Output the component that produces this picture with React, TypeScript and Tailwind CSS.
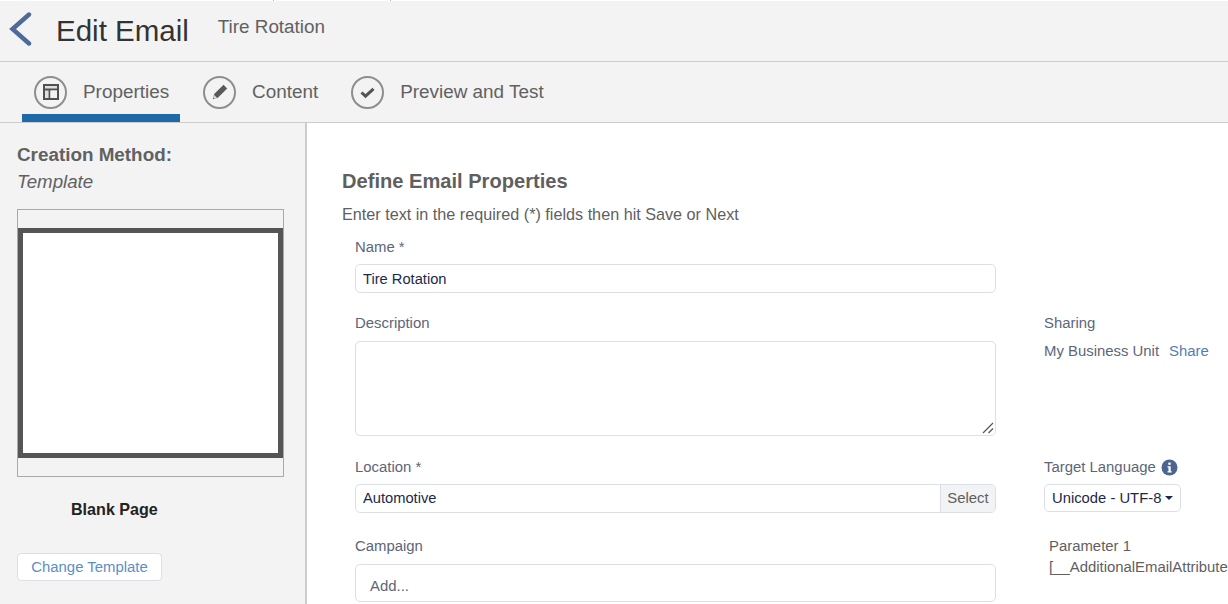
import React from "react";

const font = { fontFamily: '"Liberation Sans", Arial, sans-serif' };

function Circle({ children }: { children: React.ReactNode }) {
  return (
    <span className="flex h-[33px] w-[33px] shrink-0 items-center justify-center rounded-full border-2 border-[#8e8e8e] bg-[#f3f3f3]">
      {children}
    </span>
  );
}

function Tab({ icon, label, className }: { icon: React.ReactNode; label: string; className: string }) {
  return (
    <div className={`flex h-full items-center ${className}`}>
      <Circle>{icon}</Circle>
      <span className="ml-[16px] text-[18.9px] leading-none text-[#616161]">{label}</span>
    </div>
  );
}

const labelCls = "text-[14.9px] leading-[18px] text-[#5d6679]";
const boxCls = "rounded-[5px] border border-[#dcdfe8] bg-white";

export default function App() {
  return (
    <div style={font} className="flex h-[604px] w-[1228px] flex-col overflow-hidden bg-white">
      <header className="relative flex h-[62px] shrink-0 items-center border-t border-b border-t-white border-b-[#cccccc] bg-[#f3f3f3]">
        <span className="absolute top-[-1px] left-[273px] h-px w-px bg-[#bbbbbb]" />
        <span className="absolute top-[-1px] left-[390px] h-px w-px bg-[#bbbbbb]" />
        <svg width="24" height="34" viewBox="0 0 24 34" className="mb-[5px] ml-[9px]" fill="none">
          <path d="M20 2.500 L3.500 17 L20 31.500" stroke="#4d6a99" strokeWidth="4.4" strokeLinecap="round" strokeLinejoin="miter" />
        </svg>
        <h1 className="ml-[23px] text-[29.5px] leading-none font-normal text-[#333333]">Edit Email</h1>
        <span className="ml-[29px] -translate-y-[4px] text-[18.85px] leading-none text-[#616161]">Tire Rotation</span>
      </header>

      <nav className="flex h-[61px] shrink-0 border-b border-[#cccccc] bg-[#f3f3f3] pl-[22px]">
        <div className="flex h-full w-[158px] items-center border-b-[8px] border-[#1f69a8] pl-[12px] pt-[8px]">
          <Circle>
            <svg width="18" height="18" viewBox="0 0 18 18" fill="none">
              <rect x="2" y="2" width="14" height="14" fill="#dedede" stroke="#505050" strokeWidth="2" />
              <path d="M2 6.500H16M7.500 6.500V16" stroke="#505050" strokeWidth="1.800" />
              <rect x="8.500" y="7.500" width="6.500" height="7.500" fill="#f3f3f3" />
            </svg>
          </Circle>
          <span className="ml-[16px] text-[18.9px] leading-none text-[#616161]">Properties</span>
        </div>
        <Tab
          className="ml-[23px]"
          label="Content"
          icon={
            <svg width="18" height="18" viewBox="0 0 18 18">
              <path fill="#5a5a5a" d="M12.500 1.800l3.700 3.700-9.300 9.300-5.100 1.400 1.400-5.100z" />
              <path fill="#dddddd" d="M3.100 11.900l3 3-2.600 .8-1.200-1.200z" />
            </svg>
          }
        />
        <Tab
          className="ml-[33px]"
          label="Preview and Test"
          icon={
            <svg width="17" height="17" viewBox="0 0 17 17" fill="none">
              <path d="M2.500 8.500l4 3.700 8-7.400" stroke="#555" strokeWidth="3" />
            </svg>
          }
        />
      </nav>

      <div className="flex min-h-0 flex-1">
        <aside className="w-[307px] shrink-0 border-r-2 border-[#cccccc] bg-[#f3f3f3] pl-[17px] pt-[21px]">
          <h2 className="text-[18.850px] leading-[22px] font-bold text-[#616161]">Creation Method:</h2>
          <p className="mt-[5px] text-[18.700px] leading-[22px] text-[#616161] italic">Template</p>
          <div className="mt-[16px] flex h-[268px] w-[267px] flex-col justify-center border border-[#a9a9a9]">
            <div className="h-[230px] border-[5px] border-[#555555] bg-white" />
          </div>
          <p className="mt-[22px] ml-[54px] text-[16.100px] leading-[20px] font-bold text-[#222222]">Blank Page</p>
          <button className="mt-[34px] block h-[28px] w-[145px] rounded-[4px] border border-[#dcdfe8] bg-white text-center text-[14.900px] leading-none text-[#5b8fc9]">
            Change Template
          </button>
        </aside>

        <main className="min-w-0 flex-1 pl-[35px] pt-[46px]">
          <h2 className="text-[20.100px] leading-[24px] font-bold text-[#5f5f5f]">Define Email Properties</h2>
          <p className="mt-[12px] text-[16.200px] leading-[18px] text-[#5f5f5f]">Enter text in the required (*) fields then hit Save or Next</p>

          <div className="mt-[15px] ml-[13px] flex gap-[48px]">
            <div className="w-[641px] shrink-0">
              <label className={`block ${labelCls}`}>Name *</label>
              <div className={`mt-[8px] flex h-[29px] items-center px-[7px] pt-[1px] text-[14.7px] text-[#1b2a4a] ${boxCls}`}>Tire Rotation</div>

              <label className={`mt-[21px] block ${labelCls}`}>Description</label>
              <div className={`relative mt-[9px] h-[95px] ${boxCls}`}>
                <svg width="12" height="12" viewBox="0 0 12 12" className="absolute right-[1px] bottom-[1px]" stroke="#555" strokeWidth="1.200">
                  <path d="M1 11L11 1M6.500 11L11 6.500" />
                </svg>
              </div>

              <label className={`mt-[22px] block ${labelCls}`}>Location *</label>
              <div className={`mt-[8px] flex h-[29px] items-center overflow-hidden ${boxCls}`}>
                <span className="flex-1 px-[7px] text-[14.7px] text-[#1b2a4a]">Automotive</span>
                <span className="flex h-full w-[55px] items-center justify-center border-l border-[#dcdfe8] bg-[#f2f3f5] text-[14.9px] text-[#5f5f5f]">Select</span>
              </div>

              <label className={`mt-[24px] block ${labelCls}`}>Campaign</label>
              <div className={`mt-[9px] flex h-[38px] items-center pl-[14px] pt-[7px] text-[14.9px] text-[#5d6679] ${boxCls}`}>Add...</div>
            </div>

            <div className="min-w-0 flex-1 whitespace-nowrap">
              <div className="h-[76px]" />
              <p className={labelCls}>Sharing</p>
              <p className={`mt-[10px] ${labelCls}`}>
                My Business Unit<span className="ml-[10px] text-[#4f7fb8]">Share</span>
              </p>
              <p className={`mt-[98px] flex items-center gap-[5px] ${labelCls}`}>
                Target Language
                <svg width="17" height="17" viewBox="0 0 17 17">
                  <circle cx="8.500" cy="8.500" r="8" fill="#4d6490" />
                  <rect x="7.300" y="3.600" width="2.400" height="2.200" fill="#fff" />
                  <path d="M6.500 7.200h3.200v5h1v1.200H6.500v-1.200h1v-3.800h-1z" fill="#fff" />
                </svg>
              </p>
              <div className={`mt-[8px] flex h-[28px] w-[137px] items-center pl-[7px] text-[14.8px] text-[#1b2a4a] ${boxCls}`}>
                Unicode - UTF-8
                <span className="ml-[4px] h-0 w-0 border-x-[4px] border-t-[4px] border-x-transparent border-t-[#1b2a4a]" />
              </div>
              <p className="mt-[24px] ml-[5px] text-[14.9px] leading-[20px] text-[#5f5f5f]">Parameter 1</p>
              <p className="ml-[5px] text-[14.9px] leading-[22px] text-[#5f5f5f]">[__AdditionalEmailAttribute</p>
            </div>
          </div>
        </main>
      </div>
    </div>
  );
}
